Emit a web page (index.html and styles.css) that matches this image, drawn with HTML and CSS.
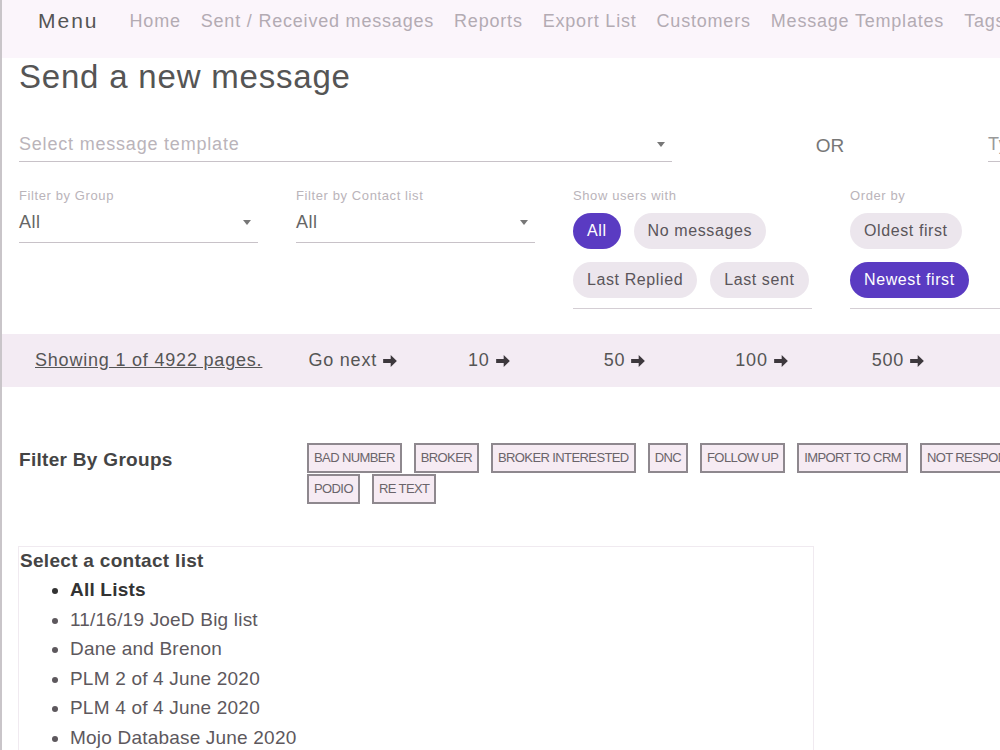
FILE: index.html
```html
<!DOCTYPE html>
<html lang="en">
<head>
  <meta charset="UTF-8" />
  <meta name="viewport" content="width=device-width, initial-scale=1.0"/>
  <title>Send a new message</title>
  <link rel="stylesheet" href="styles.css">
</head>
<body>
  <div class="page">
    <div class="nav">
      <span class="nav-title">Menu</span>
      <a href="#">Home</a>
      <a href="#">Sent / Received messages</a>
      <a href="#">Reports</a>
      <a href="#">Export List</a>
      <a href="#">Customers</a>
      <a href="#">Message Templates</a>
      <a href="#">Tags</a>
    </div>

    <h1 class="title">Send a new message</h1>

    <div class="template-row">
      <div class="field select">
        <span class="placeholder">Select message template</span>
        <span class="caret"></span>
      </div>
      <div class="or">OR</div>
      <div class="field text-input">
        <span class="placeholder dark">Type a message</span>
      </div>
    </div>

    <div class="filters">
      <div class="filter">
        <label>Filter by Group</label>
        <div class="field select">
          <span class="value">All</span>
          <span class="caret"></span>
        </div>
      </div>
      <div class="filter">
        <label>Filter by Contact list</label>
        <div class="field select">
          <span class="value">All</span>
          <span class="caret"></span>
        </div>
      </div>
      <div class="filter">
        <label>Show users with</label>
        <div class="chips">
          <button class="chip active">All</button>
          <button class="chip">No messages</button>
          <button class="chip">Last Replied</button>
          <button class="chip">Last sent</button>
        </div>
      </div>
      <div class="filter">
        <label>Order by</label>
        <div class="chips">
          <button class="chip">Oldest first</button>
          <button class="chip active">Newest first</button>
        </div>
      </div>
    </div>

    <div class="pager">
      <a href="#" class="pager-info">Showing 1 of 4922 pages.</a>
      <a href="#" class="pager-link go">Go next <svg viewBox="0 0 14 14"><path d="M1 5.3h6.6V1.8L13 7l-5.4 5.2V8.7H1z"/></svg></a>
      <a href="#" class="pager-link">10 <svg viewBox="0 0 14 14"><path d="M1 5.3h6.6V1.8L13 7l-5.4 5.2V8.7H1z"/></svg></a>
      <a href="#" class="pager-link">50 <svg viewBox="0 0 14 14"><path d="M1 5.3h6.6V1.8L13 7l-5.4 5.2V8.7H1z"/></svg></a>
      <a href="#" class="pager-link">100 <svg viewBox="0 0 14 14"><path d="M1 5.3h6.6V1.8L13 7l-5.4 5.2V8.7H1z"/></svg></a>
      <a href="#" class="pager-link">500 <svg viewBox="0 0 14 14"><path d="M1 5.3h6.6V1.8L13 7l-5.4 5.2V8.7H1z"/></svg></a>
    </div>

    <div class="groups">
      <h3>Filter By Groups</h3>
      <div class="tags">
        <span class="tag">BAD NUMBER</span>
        <span class="tag">BROKER</span>
        <span class="tag">BROKER INTERESTED</span>
        <span class="tag">DNC</span>
        <span class="tag">FOLLOW UP</span>
        <span class="tag">IMPORT TO CRM</span>
        <span class="tag">NOT RESPONDING</span>
        <span class="tag">PODIO</span>
        <span class="tag">RE TEXT</span>
      </div>
    </div>

    <div class="contact-lists">
      <h3>Select a contact list</h3>
      <ul>
        <li class="current">All Lists</li>
        <li>11/16/19 JoeD Big list</li>
        <li>Dane and Brenon</li>
        <li>PLM 2 of 4 June 2020</li>
        <li>PLM 4 of 4 June 2020</li>
        <li>Mojo Database June 2020</li>
      </ul>
    </div>
  </div>
</body>
</html>
```

FILE: styles.css
```css
body {
  margin: 0;
  padding: 0;
  font-family: "Liberation Sans", Arial, sans-serif;
  color: #555;
  background: #fff;
  overflow: hidden;
}
.page {
  border-left: 2px solid #c9c5c9;
  min-height: 750px;
  overflow: hidden;
}
.nav {
  background-color: #fbf5fb;
  height: 58px;
  padding: 0 0 16px 36px;
  display: flex;
  align-items: center;
  white-space: nowrap;
  box-sizing: border-box;
}
.nav-title {
  font-size: 21px;
  letter-spacing: 2px;
  color: #555;
  margin-right: 31px;
}
.nav a {
  color: #b3abb3;
  font-size: 18px;
  letter-spacing: 0.8px;
  text-decoration: none;
  margin-right: 20px;
}
.title {
  font-weight: normal;
  font-size: 33px;
  letter-spacing: 0.8px;
  color: #555;
  margin: 0;
  padding: 0 0 0 17px;
  line-height: 38px;
}

/* underline style inputs */
.field {
  border-bottom: 1px solid #c8c2c8;
  display: flex;
  align-items: center;
  justify-content: space-between;
}
.caret {
  width: 0;
  height: 0;
  border-left: 4px solid transparent;
  border-right: 4px solid transparent;
  border-top: 5px solid #777;
  margin-right: 7px;
}
.placeholder {
  color: #bab4ba;
  font-size: 18px;
  letter-spacing: 0.8px;
}
.placeholder.dark {
  color: #999;
}
.value {
  color: #666;
  font-size: 18px;
  letter-spacing: 0.5px;
}

.template-row {
  display: flex;
  align-items: flex-end;
  margin-top: 31px;
  padding-left: 17px;
}
.template-row .select {
  width: 653px;
  height: 34px;
  flex-shrink: 0;
}
.or {
  width: 316px;
  flex-shrink: 0;
  text-align: center;
  font-size: 19px;
  color: #777;
  padding-bottom: 5px;
}
.text-input {
  width: 300px;
  flex-shrink: 0;
  height: 34px;
}

.filters {
  display: grid;
  grid-template-columns: 239px 239px 239px 1fr;
  column-gap: 38px;
  padding-left: 17px;
  margin-top: 27px;
}
.filter label {
  display: block;
  font-size: 13px;
  letter-spacing: 0.6px;
  color: #bab4ba;
  line-height: 14px;
}
.filter .select {
  height: 39px;
  margin-top: 0;
}
.chips {
  display: flex;
  flex-wrap: wrap;
  gap: 13px 13px;
  margin-top: 10px;
  padding-bottom: 10px;
  border-bottom: 1px solid #d4ced4;
}
.chip {
  font-family: "Liberation Sans", Arial, sans-serif;
  font-size: 16px;
  letter-spacing: 0.6px;
  height: 36px;
  padding: 0 14px;
  border: none;
  border-radius: 18px;
  background: #ece6ed;
  color: #5a555a;
}
.chip.active {
  background: #5a3bc2;
  color: #fff;
}

.pager {
  background: #f3ebf3;
  height: 53px;
  margin-top: 25px;
  display: flex;
  align-items: center;
  padding-left: 33px;
  white-space: nowrap;
}
.pager a {
  font-size: 18px;
  color: #555;
  letter-spacing: 0.8px;
  text-decoration: none;
}
.pager .pager-info {
  text-decoration: underline;
  margin-right: 46px;
}
.pager-link {
  display: flex;
  align-items: center;
  gap: 5px;
}
.pager-link svg {
  width: 16px;
  height: 16px;
  fill: #3d383d;
}
.pager-link.go {
  margin-right: 70px;
}
.pager-link:nth-child(3) {
  margin-right: 93px;
}
.pager-link:nth-child(4) {
  margin-right: 89px;
}
.pager-link:nth-child(5) {
  margin-right: 83px;
}

.groups {
  display: flex;
  margin-top: 56px;
  padding-left: 17px;
}
.groups h3 {
  width: 288px;
  flex-shrink: 0;
  margin: 6px 0 0;
  font-size: 19px;
  letter-spacing: 0.3px;
  color: #444;
}
.tags {
  display: flex;
  flex-wrap: wrap;
  gap: 1px 12px;
  width: 760px;
  flex-shrink: 0;
}
.tag {
  font-size: 13px;
  letter-spacing: -0.6px;
  color: #6a646a;
  background: #f6ebf3;
  border: 2px solid #8e888e;
  height: 26px;
  line-height: 26px;
  padding: 0 5px;
}

.contact-lists {
  margin: 42px 0 0 16px;
  width: 794px;
  border: 1px solid #f0eaf0;
  border-bottom: none;
}
.contact-lists h3 {
  margin: 2px 0 0 1px;
  font-size: 19px;
  letter-spacing: 0.3px;
  color: #444;
  line-height: 24px;
}
.contact-lists ul {
  margin: 2px 0 0;
  padding-left: 51px;
}
.contact-lists li {
  font-size: 19px;
  letter-spacing: 0.2px;
  line-height: 29.6px;
  color: #5d585d;
}
.contact-lists li.current {
  font-weight: bold;
  color: #333;
}
```
